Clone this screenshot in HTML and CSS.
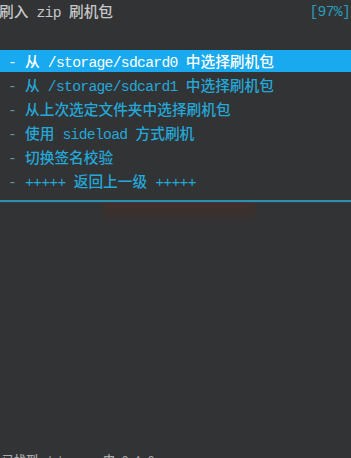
FILE: index.html
```html
<!DOCTYPE html>
<html lang="zh">
<head>
<meta charset="utf-8">
<link rel="stylesheet" href="styles.css">
</head>
<body>
<div class="screen">
  <div class="header">
    <span class="title">刷入<span class="lat"> zip </span>刷机包</span>
    <span class="pct lat">[97%]</span>
  </div>
  <ul class="menu">
    <li class="item selected"><span class="dash">-</span>从<span class="lat"> /storage/sdcard0 </span>中选择刷机包</li>
    <li class="item"><span class="dash">-</span>从<span class="lat"> /storage/sdcard1 </span>中选择刷机包</li>
    <li class="item"><span class="dash">-</span>从上次选定文件夹中选择刷机包</li>
    <li class="item"><span class="dash">-</span>使用<span class="lat"> sideload </span>方式刷机</li>
    <li class="item"><span class="dash">-</span>切换签名校验</li>
    <li class="item"><span class="dash">-</span><span class="lat">+++++ </span>返回上一级<span class="lat"> +++++</span></li>
  </ul>
  <div class="separator"></div>
  <div class="log">
    <div class="ghost"></div>
  </div>
  <div class="footer">已找到<span class="lat"> /storage </span>中<span class="lat"> 0.1.0</span></div>
</div>
</body>
</html>
```
FILE: styles.css
```css
html, body {
  margin: 0;
  padding: 0;
  background: #323335;
}
.screen {
  width: 351px;
  height: 458px;
  overflow: hidden;
  display: flex;
  flex-direction: column;
  font-family: "Noto Sans CJK SC", "Liberation Mono", monospace;
  font-size: 14.7px;
  font-weight: 500;
  background: #323335;
}
.lat {
  font-family: "Liberation Mono", monospace;
  font-weight: 400;
  letter-spacing: -0.7px;
  white-space: pre;
}
.header {
  height: 24px;
  display: flex;
  justify-content: space-between;
  align-items: center;
  line-height: 22px;
  color: #c6c7c8;
}
.title {
  margin-left: -1px;
}
.pct {
  color: #2a9cb7;
  margin-right: 1px;
}
.menu {
  list-style: none;
  margin: 26px 0 0 0;
  padding: 0;
  display: flex;
  flex-direction: column;
  gap: 2px;
}
.item {
  height: 22px;
  line-height: 22px;
  padding-left: 8px;
  color: #24a8d8;
  white-space: nowrap;
}
.dash {
  display: inline-block;
  width: 17px;
  color: #5f93a6;
  font-family: "Liberation Mono", monospace;
}
.selected {
  background: #18a9ee;
  color: #ffffff;
}
.selected .dash {
  color: #e8f6ff;
}
.separator {
  margin-top: 8px;
  height: 2px;
  background: #2b8fae;
  border-bottom: 1px solid #3e3544;
}
.log {
  flex: 1;
}
.ghost {
  margin-left: 103px;
  width: 152px;
  height: 20px;
  background: linear-gradient(#40302b, #383130 70%, #333335);
}
.footer {
  height: 6px;
  line-height: 16px;
  color: #a9aaab;
  font-size: 12px;
  padding-left: 2px;
  white-space: nowrap;
}
```
